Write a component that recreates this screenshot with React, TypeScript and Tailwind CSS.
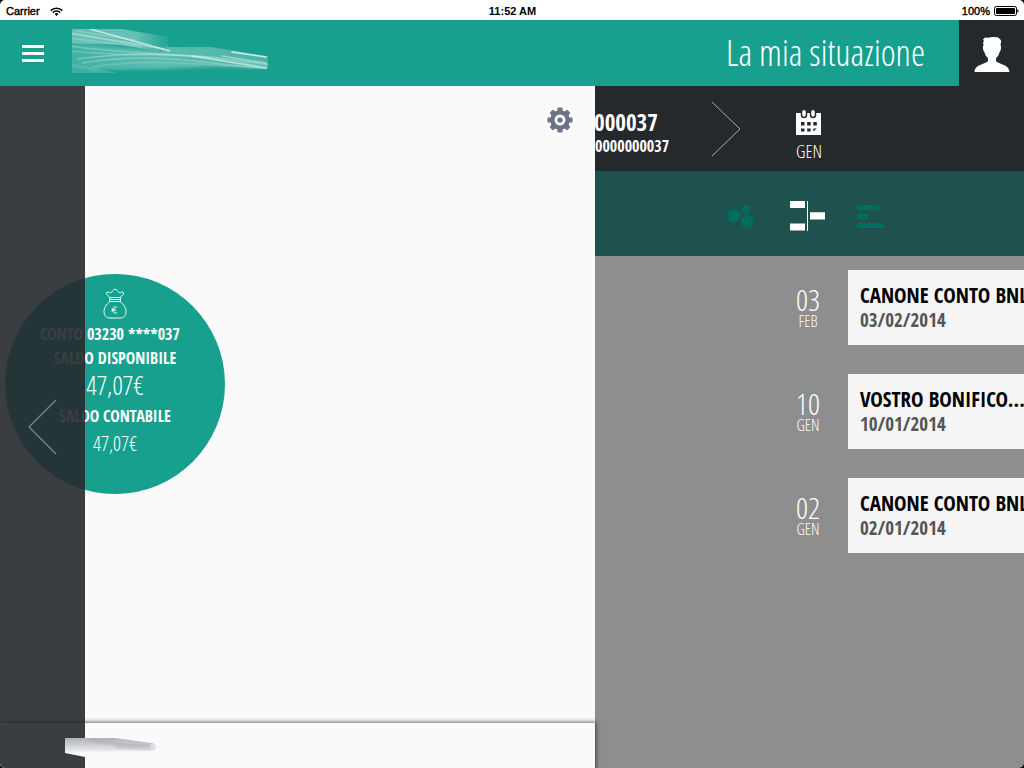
import type { ReactNode } from "react";

const condensed = "font-['Open_Sans_Condensed','Noto_Sans_Condensed','Open_Sans',sans-serif]";
const condensedLight =
  "font-['Open_Sans_Condensed_Light','Open_Sans_Condensed','Noto_Sans_Condensed','Open_Sans',sans-serif] font-light";

function WifiIcon() {
  return (
    <svg className="h-[9px] w-[13px]" viewBox="0 0 13 9" fill="none" stroke="#000" strokeWidth="1.5" aria-hidden="true">
      <path d="M.7 3.6a8.2 8.2 0 0 1 11.6 0" />
      <path d="M2.8 5.6a5.2 5.2 0 0 1 7.4 0" />
      <path d="M4.6 6.9 6.5 9l1.9-2.1a2.7 2.7 0 0 0-3.8 0z" fill="#000" stroke="none" />
    </svg>
  );
}

function BatteryIcon() {
  return (
    <svg className="h-[10px] w-[25px]" viewBox="0 0 25 10" aria-hidden="true">
      <rect x=".5" y=".5" width="22" height="9" rx="1.8" fill="none" stroke="#000" />
      <rect x="2" y="2" width="19" height="6" rx=".8" />
      <path d="M23.4 3.2c1.6.3 1.6 3.3 0 3.6z" />
    </svg>
  );
}

function StatusBar() {
  return (
    <div className="grid h-5 grid-cols-3 items-center bg-white pt-0.5 pr-[5px] pl-1.5 font-['Liberation_Sans',sans-serif] text-[11px] text-black [-webkit-text-stroke:0.4px_#000]">
      <span className="flex items-center gap-2.5">
        Carrier <WifiIcon />
      </span>
      <span className="text-center font-bold [-webkit-text-stroke:0]">11:52 AM</span>
      <span className="flex items-center justify-end gap-1">
        100% <BatteryIcon />
      </span>
    </div>
  );
}

function HeaderBrush() {
  return (
    <svg className="h-[46px] w-[198px]" viewBox="0 0 198 46" fill="none" aria-hidden="true">
      <defs>
        <linearGradient id="brush" x1="0" x2="1">
          <stop offset="0" stopColor="#fff" stopOpacity=".18" />
          <stop offset=".45" stopColor="#fff" stopOpacity=".3" />
          <stop offset="1" stopColor="#fff" stopOpacity=".22" />
        </linearGradient>
        <linearGradient id="brushTop" x1="0" x2="1">
          <stop offset="0" stopColor="#fff" stopOpacity=".34" />
          <stop offset=".65" stopColor="#fff" stopOpacity=".34" />
          <stop offset="1" stopColor="#fff" stopOpacity=".02" />
        </linearGradient>
        <filter id="soft" x="-5%" y="-20%" width="110%" height="140%">
          <feGaussianBlur stdDeviation=".7" />
        </filter>
        <filter id="softer" x="-5%" y="-20%" width="110%" height="140%">
          <feGaussianBlur stdDeviation="1.400" />
        </filter>
        <clipPath id="brushEdge">
          <path d="M0 0h50l46 8v10h44l56 9v13l-56 3H46v3H0z" />
        </clipPath>
      </defs>
      <g clipPath="url(#brushEdge)">
        <path d="M-3-2h42l35 5 25 5v14H84L50 16-3 14z" fill="url(#brushTop)" filter="url(#soft)" />
        <path d="M-3 13 40 17l50 5 6-5h44l58 9v14l-58-2-50 2-70 1-23-5z" fill="url(#brush)" filter="url(#softer)" />
        <path d="M0 35 46 44H0z" fill="#fff" opacity=".16" />
        <g stroke="#fff" filter="url(#soft)">
          <path d="M18 0 98 22" opacity=".6" strokeWidth="1.600" />
          <path d="M-3 4 92 20" opacity=".35" strokeWidth="2" />
          <path d="M-3 9 70 18M4 2l60 9" opacity=".2" strokeWidth="1.500" />
          <path d="M-3 17c60 8 90 7 140 11l60 8" opacity=".25" strokeWidth="1.500" />
          <path d="M-3 22c60 6 90 2 140 6l60 7" opacity=".2" strokeWidth="1.500" />
          <path d="M5 30c50-7 90-6 130-1l60 9" opacity=".25" strokeWidth="1.500" />
          <path d="M10 34c50-8 90-5 130 0l55 6" opacity=".25" strokeWidth="1.500" />
          <path d="M20 38c50-8 90-4 175 1" opacity=".16" strokeWidth="1.500" />
        </g>
        <g stroke="#fff" filter="url(#soft)" strokeLinecap="round">
          <path d="M160 23 194 28" opacity=".75" strokeWidth="1.600" />
          <path d="M120 27 194 39" opacity=".5" strokeWidth="1.600" />
          <path d="M150 27 194 34" opacity=".4" strokeWidth="1.500" />
        </g>
      </g>
    </svg>
  );
}

function FooterBrush() {
  return (
    <svg className="h-5 w-[92px]" viewBox="0 0 92 20" fill="none" aria-hidden="true">
      <defs>
        <linearGradient id="greyV" x1="0" y1="0" x2="0" y2="1">
          <stop offset="0" stopColor="#b0b2b8" />
          <stop offset=".55" stopColor="#dcdde0" />
          <stop offset=".8" stopColor="#fafafa" />
        </linearGradient>
        <filter id="softGrey" x="-5%" y="-40%" width="110%" height="180%">
          <feGaussianBlur stdDeviation="1" />
        </filter>
      </defs>
      <path d="M0 0h50l37 5c4 1 4 7 0 8L20 14v5L0 15z" fill="url(#greyV)" />
      <g stroke="#9da2ab" filter="url(#softGrey)">
        <path d="M24 2 60 7l27 1" opacity=".45" strokeWidth="3" />
        <path d="M50 9 86 11" opacity=".35" strokeWidth="2" />
      </g>
      <ellipse cx="88" cy="9" rx="2.500" ry="3.500" fill="#dcdee1" />
    </svg>
  );
}

function ProfileIcon() {
  return (
    <svg className="h-[36px] w-[36px]" viewBox="0 0 36 36" fill="#fff" aria-hidden="true">
      <path d="M9 3.500 11 1.500l3 .3L18 1l5.500.3L26 3l1.200 2-.7 4 .5 1.500c.3 2-.4 4.500-1.400 5.500-.6 2.500-1.800 4.500-3.600 6.200V25c1.500 3 13.200 3 13.500 11H.5C.8 28 12.500 28 14 25v-2.800c-1.800-1.700-3-3.700-3.600-6.200-1-1-1.700-3.500-1.400-5.500L9.500 9 9 6.500l1-1.500z" />
    </svg>
  );
}

function GearIcon() {
  return (
    <svg className="h-[26px] w-[26px]" viewBox="-13 -13 26 26" aria-hidden="true">
      <g fill="#6b7386">
        <circle r="9.800" />
        {[0, 45, 90, 135, 180, 225, 270, 315].map((a) => (
          <rect key={a} x="-2.600" y="-12.500" width="5.200" height="6" rx="1.200" transform={`rotate(${a})`} />
        ))}
      </g>
      <circle r="5.500" fill="#fafafa" />
      <circle r="2.600" fill="#6b7386" />
    </svg>
  );
}

function MoneyBagIcon() {
  return (
    <svg className="h-[30px] w-6" viewBox="0 0 24 30" fill="none" stroke="#e8fffa" strokeLinejoin="round" aria-hidden="true">
      <path d="M7 8.500 3.500 5c-.5-2 1-2.500 3-1.500 1 .4 1.800.2 2.500-.8 1.500-3 4.500-3 6 0 .7 1 1.500 1.200 2.500.8 2-1 3.500-.5 3 1.500L17 8.500z" />
      <path d="M6.500 8.500h11v4h-11zM6.500 10.500h11" />
      <path d="M7 12.500C3 15.500 1 19 1 22.500c0 4.500 2.500 6.500 6 6.500h10c3.500 0 6-2 6-6.500 0-3.500-2-7-6-10" />
      <path d="M14 18.300c-2.800-1.300-4.300.3-4.300 2.700s1.500 4 4.300 2.700M8.500 20.300h4.500M8.500 21.800h4" />
    </svg>
  );
}

function CalendarIcon() {
  return (
    <svg className="h-[26px] w-[26px]" viewBox="0 0 26 26" aria-hidden="true">
      <path d="M0 3h25v22H0z" fill="#fff" />
      <g fill="#fff" stroke="#25292c" strokeWidth="1.500">
        <rect x="5.500" y="-.7" width="5" height="8.200" rx="2.500" />
        <rect x="14.500" y="-.7" width="5" height="8.200" rx="2.500" />
      </g>
      <path d="M5 12h3.500v3.500H5zM11.200 12h3.500v3.500h-3.500zM17.300 12h3.500v3.500h-3.500zM5 18.500h3.500v3H5zM11.200 18.500h3.500v3h-3.500zM17.300 18.500h3.500l-3.500 3z" fill="#25292c" />
    </svg>
  );
}

function Header() {
  return (
    <header className="flex h-[66px] items-center bg-[#18a08f]">
      <button type="button" aria-label="Menu" className="ml-[22px] flex w-[22px] flex-col gap-1">
        <span className="h-[3px] bg-white" />
        <span className="h-[3px] bg-white" />
        <span className="h-[3px] bg-white" />
      </button>
      <div className="ml-7 pb-0.5">
        <HeaderBrush />
      </div>
      <h1 className={`${condensedLight} mr-[34px] ml-auto text-4xl text-white`}>La mia situazione</h1>
      <button type="button" aria-label="Profilo" className="flex w-[65px] items-center justify-center self-stretch bg-[#25292c] pt-0.5">
        <ProfileIcon />
      </button>
    </header>
  );
}

function Balance() {
  return (
    <section className="flex size-[220px] flex-col items-center rounded-full bg-[#18a08f] pt-[15px] text-white">
      <MoneyBagIcon />
      <p className="mt-[3px] mr-2.5 text-base leading-6 font-bold">CONTO 03230 ****037</p>
      <p className="text-base leading-6 font-bold">SALDO DISPONIBILE</p>
      <p className={`${condensedLight} text-[26px] leading-[30px]`}>47,07€</p>
      <p className="text-base leading-8 font-bold">SALDO CONTABILE</p>
      <p className={`${condensedLight} text-xl leading-6`}>47,07€</p>
    </section>
  );
}

function Drawer() {
  return (
    <aside className={`${condensed} relative flex w-[595px] shrink-0 flex-col bg-[#fafafa]`}>
      <div className="flex justify-end pt-[21px] pr-[22px]">
        <button type="button" aria-label="Impostazioni">
          <GearIcon />
        </button>
      </div>
      <div className="flex-1 pt-[141px] pl-[5px]">
        <Balance />
      </div>
      <footer className="h-[45px] bg-[#fafafa] shadow-[0_0_4px_1px_rgba(0,0,0,0.6)]" />
      <div className="absolute inset-y-0 left-0 w-[85px] bg-[#25292c]/90">
        <button type="button" aria-label="Indietro" className="mt-[313px] ml-7">
          <svg className="h-[56px] w-[29px]" viewBox="0 0 29 56" fill="none" stroke="#7b8786" strokeWidth="1.300" aria-hidden="true">
            <path d="M28 1 1 28l27 27" />
          </svg>
        </button>
      </div>
      <div className="absolute bottom-[10px] left-[65px]">
        <FooterBrush />
      </div>
    </aside>
  );
}

function ViewTab({ label, children }: { label: string; children: ReactNode }) {
  return (
    <button type="button" aria-label={label} className="flex w-9 items-center justify-center">
      {children}
    </button>
  );
}

const movements = [
  { day: "03", month: "FEB", title: "CANONE CONTO BNL", date: "03/02/2014" },
  { day: "10", month: "GEN", title: "VOSTRO BONIFICO...", date: "10/01/2014" },
  { day: "02", month: "GEN", title: "CANONE CONTO BNL", date: "02/01/2014" },
];

function Main() {
  return (
    <main className={`${condensed} min-w-0 flex-1 overflow-hidden bg-[#8e8e8e]`}>
      <div className="flex h-[85px] items-center bg-[#25292c] text-white">
        <div className="w-[116px] shrink-0 pt-2.5 font-bold">
          <p className="-ml-px text-[23px] leading-6">000037</p>
          <p className="text-base leading-6">0000000037</p>
        </div>
        <svg className="h-[56px] w-[30px] shrink-0" viewBox="0 0 30 56" fill="none" stroke="#a8aaab" aria-hidden="true">
          <path d="M1 1l28 27L1 55" />
        </svg>
        <button type="button" className="ml-[55px] flex flex-col items-center pt-4">
          <CalendarIcon />
          <span className={`${condensedLight} mt-[3px] text-lg leading-6`}>GEN</span>
        </button>
      </div>
      <nav className="flex h-[85px] items-center gap-[30px] bg-[#1f514e] pt-1 pl-[128px]">
        <ViewTab label="Bolle">
          <svg className="h-6 w-7" viewBox="0 0 28 24" fill="#006e5c" aria-hidden="true">
            <circle cx="6.700" cy="11.500" r="6.700" />
            <circle cx="18.700" cy="5.300" r="4.300" />
            <circle cx="20.200" cy="17.300" r="6.600" />
          </svg>
        </ViewTab>
        <ViewTab label="Cronologia">
          <svg className="h-[30px] w-[35px]" viewBox="0 0 35 30" fill="#fff" aria-hidden="true">
            <path d="M0 0h15v7H0zM0 22.500h15v7H0zM20 11.300h15v7.200H20zM17 0h1v30h-1z" />
          </svg>
        </ViewTab>
        <ViewTab label="Barre">
          <svg className="h-6 w-8" viewBox="0 0 32 24" fill="#006e5c" aria-hidden="true">
            <path d="M0 1h22v5H0zM0 10h11v5H0zM0 19h27v5H0z" />
          </svg>
        </ViewTab>
      </nav>
      <ul className="flex flex-col gap-[29px] pt-3.5">
        {movements.map((m) => (
          <li key={m.date} className="flex h-[75px]">
            <div className={`${condensedLight} ml-[173px] flex w-20 shrink-0 flex-col items-center pt-[18px] text-white`}>
              <span className="text-[30px] leading-6">{m.day}</span>
              <span className="text-base leading-[18px]">{m.month}</span>
            </div>
            <div className="flex-1 bg-[#f5f5f5] px-3 pt-3 font-bold whitespace-nowrap">
              <p className="text-[21px] leading-[26px] text-black">{m.title}</p>
              <p className="text-[19px] leading-6 text-[#555]">{m.date}</p>
            </div>
          </li>
        ))}
      </ul>
    </main>
  );
}

export default function App() {
  return (
    <div className="min-h-screen bg-black">
      <div className="flex min-h-screen flex-col overflow-hidden rounded-[5px]">
        <StatusBar />
        <Header />
        <div className="flex flex-1">
          <Drawer />
          <Main />
        </div>
      </div>
    </div>
  );
}
